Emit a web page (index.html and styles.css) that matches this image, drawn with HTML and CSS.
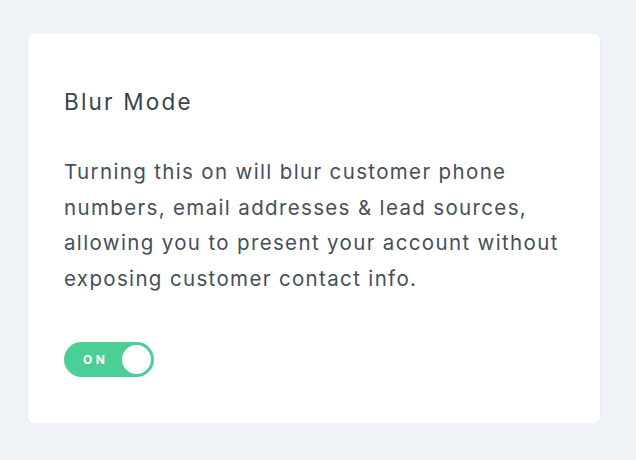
FILE: index.html
```html
<!DOCTYPE html>
<html lang="en">
<head>
  <meta charset="UTF-8">
  <meta name="viewport" content="width=device-width, initial-scale=1.0">
  <title>Blur Mode</title>
  <link rel="stylesheet" href="styles.css">
</head>
<body>

<div class="card">
  <h2 class="card-title">Blur Mode</h2>

  <p class="card-text">
    Turning this on will blur customer phone numbers, email addresses &amp; lead sources,
    allowing you to present your account without exposing customer contact info.
  </p>

  <label class="toggle is-on">
    <span class="toggle-label">ON</span>
    <span class="toggle-knob"></span>
  </label>
</div>

</body>
</html>
```

FILE: styles.css
```css
/* Reset */
* {
  margin: 0;
  padding: 0;
  box-sizing: border-box;
}

/* Page */
body {
  font-family: 'Inter', 'Open Sans', sans-serif;
  background-color: #eff2f7;
  padding: 34px 36px 0 28px;
}

/* Card */
.card {
  background-color: #ffffff;
  border-radius: 6px;
  box-shadow: 0 1px 3px rgba(40, 60, 90, 0.06);
  width: 572px;
  height: 389px;
  padding: 55px 36px 0 36px;
}

.card-title {
  font-size: 22.5px;
  font-weight: 400;
  letter-spacing: 2.2px;
  color: #38444f;
  line-height: 26px;
  margin-bottom: 39px;
}

.card-text {
  font-size: 20.5px;
  letter-spacing: 1.35px;
  line-height: 35.5px;
  color: #454f5a;
  width: 510px;
  margin-bottom: 46px;
}

/* Toggle */
.toggle {
  display: flex;
  align-items: center;
  justify-content: space-between;
  width: 90px;
  height: 35px;
  border-radius: 18px;
  background-color: #4ccf97;
  padding: 0 1px 0 19px;
  cursor: pointer;
}

.toggle-label {
  font-size: 12px;
  font-weight: 700;
  letter-spacing: 3.5px;
  color: #ffffff;
}

.toggle-knob {
  width: 33px;
  height: 33px;
  border-radius: 50%;
  background-color: #ffffff;
  border: 2px solid #4ccf97;
}
```
